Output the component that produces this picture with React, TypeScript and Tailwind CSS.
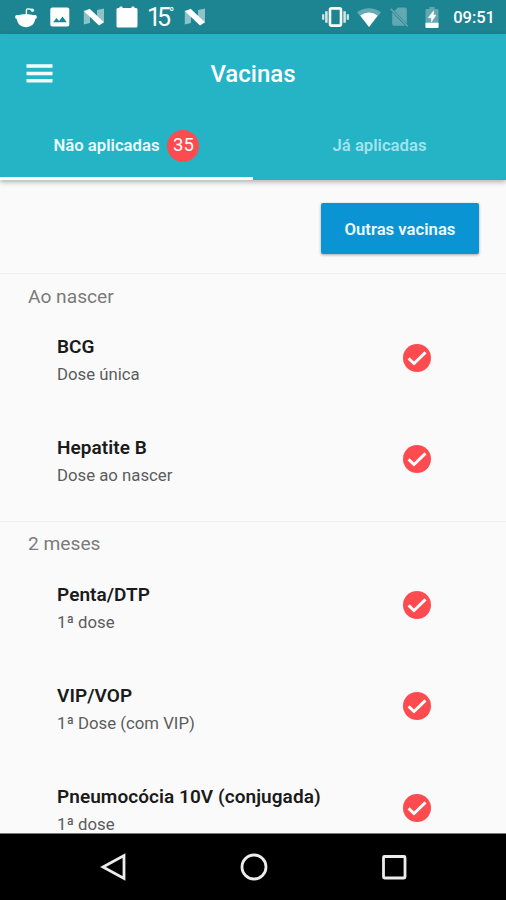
import clsx from "clsx";

interface Dose {
    name: string;
    dose: string;
}

interface Period {
    label: string;
    vaccines: Dose[];
}

const periods: Period[] = [
    {
        label: "Ao nascer",
        vaccines: [
            { name: "BCG", dose: "Dose única" },
            { name: "Hepatite B", dose: "Dose ao nascer" },
        ],
    },
    {
        label: "2 meses",
        vaccines: [
            { name: "Penta/DTP", dose: "1ª dose" },
            { name: "VIP/VOP", dose: "1ª Dose (com VIP)" },
            { name: "Pneumocócia 10V (conjugada)", dose: "1ª dose" },
        ],
    },
];

const RedditIcon = () => (
    <svg className="w-[24px] h-[22px]" viewBox="0 0 24 22" fill="none">
        <path d="M3 9.5Q12 6.5 21 9.5q1.8 1.4.3 3.6C20.6 18 17 21.200 12 21.200S3.4 18 2.7 13.100Q1.2 10.9 3 9.5z" fill="#fff" />
        <circle cx="3" cy="11" r="1.9" fill="#fff" />
        <circle cx="21" cy="11" r="1.9" fill="#fff" />
        <path d="M12.4 9V4.6q0-1.8 1.6-1.7L18 3.5" stroke="#fff" strokeWidth="1.4" />
        <circle cx="18.4" cy="4.2" r="1.7" fill="#e3f1f2" />
    </svg>
);

const PhotoIcon = () => (
    <svg className="w-[20px] h-[20px]" viewBox="0 0 20 20">
        <rect x="0.3" y="0.5" width="19" height="19" rx="2" fill="#fff" />
        <path d="M3.2 15.3 6.5 11l2.6 3 3.4-4.5 4.3 5.8z" fill="#1d8491" />
    </svg>
);

const NougatIcon = () => (
    <svg className="w-[22px] h-[18px]" viewBox="0 0 22 18">
        <path d="M0.8 2.5H7v12.5l-6.2 1.6zM14 2l7-1.5v14l-7-3z" fill="#8fc1c8" />
        <path d="M1 3.2 6.6 0.8 21 14.2 16 17.4z" fill="#fff" />
    </svg>
);

const CalendarIcon = () => (
    <svg className="w-[22px] h-[22px]" viewBox="0 0 22 22" fill="#fff">
        <rect x="0.5" y="2" width="21" height="19.5" rx="1.5" />
        <rect x="3.5" y="0.5" width="3" height="4" rx="0.8" />
        <rect x="15.5" y="0.5" width="3" height="4" rx="0.8" />
    </svg>
);

const VibrateIcon = () => (
    <svg className="w-[27px] h-[20px]" viewBox="0 0 27 20" fill="none">
        <rect x="8" y="1.4" width="11" height="17.2" rx="1.5" stroke="#fff" strokeWidth="2.6" />
        <path d="M4.4 4.3v11.4M22.6 4.3v11.4" stroke="#d3e8eb" strokeWidth="2.5" />
        <path d="M1.2 7.3v5.4M25.8 7.3v5.4" stroke="#d3e8eb" strokeWidth="2.2" />
    </svg>
);

const WifiIcon = () => (
    <svg className="w-[24px] h-[19px]" viewBox="0 0 24 19">
        <path d="M0 4.2Q12-3.8 24 4.2L12 19z" fill="#68abb4" />
        <path d="M3.3 7.6q8.7-6 17.4 0L12 19z" fill="#fff" />
    </svg>
);

const NoSimIcon = () => (
    <svg className="w-[19px] h-[20px]" viewBox="0 0 19 20">
        <path d="M8 0.5h7q1.8 0 1.8 1.8v14.5L4.5 4z" fill="#62a8b1" />
        <path d="M2.2 5.2v11.8q0 1.8 1.8 1.8h11.2z" fill="#62a8b1" />
        <path d="M0.7 1.7 17.7 19.2" stroke="#62a8b1" strokeWidth="1.6" />
    </svg>
);

const BatteryIcon = () => (
    <svg className="w-[14px] h-[21px]" viewBox="0 0 14 21">
        <path d="M1.4 2h3V0h5.2v2h3q.9 0 .9.9V20q0 1-1 1H1.5q-1 0-1-1V2.9q0-.9.9-.9z" fill="#62a8b1" />
        <path d="M0.5 15.8h13V20q0 1-1 1h-11q-1 0-1-1z" fill="#fff" />
        <path d="M8.6 3.8 3.2 10.8h3.2V15l4.6-7H8.6z" fill="#fff" stroke="#fff" strokeWidth="0.5" />
    </svg>
);

const MenuIcon = () => (
    <svg className="w-[27px] h-[19px]" viewBox="0 0 27 19">
        <path d="M0.5 2.1h26M0.5 9.4h26M0.5 16.7h26" stroke="#f4fdfe" strokeWidth="3.5" />
    </svg>
);

const CheckIcon = () => (
    <svg className="w-[28px] h-[28px]" viewBox="0 0 28 28" fill="none">
        <circle cx="14" cy="14" r="14" fill="#fd4b50" />
        <path d="M5.6 14.4 11 19.6 22.5 8.4" stroke="#fff" strokeWidth="2.9" />
    </svg>
);

function StatusBar() {
    return (
        <div className="flex h-[34px] shrink-0 items-center bg-[#1d8491] pl-[14px] pr-[11px] text-white">
            <RedditIcon />
            <div className="ml-[12px]">
                <PhotoIcon />
            </div>
            <div className="ml-[13px]">
                <NougatIcon />
            </div>
            <div className="ml-[11px]">
                <CalendarIcon />
            </div>
            <div className="ml-[9px] flex w-[26px] items-start pt-[2px] text-[25px] leading-[28px] tracking-[-4px]">
                15<span className="ml-[2px] text-[14px] leading-[18px]">°</span>
            </div>
            <div className="ml-[11px]">
                <NougatIcon />
            </div>
            <div className="ml-auto">
                <VibrateIcon />
            </div>
            <div className="ml-[8px]">
                <WifiIcon />
            </div>
            <div className="ml-[9px]">
                <NoSimIcon />
            </div>
            <div className="ml-[16px]">
                <BatteryIcon />
            </div>
            <span className="ml-[14px] mt-[2px] text-[16.5px] font-medium leading-none">09:51</span>
        </div>
    );
}

function Header() {
    return (
        <header className="z-10 shrink-0 bg-[#24b4c6] text-white shadow-[0_2px_5px_rgba(0,0,0,0.3)]">
            <div className="grid h-[79px] grid-cols-[1fr_auto_1fr] items-center px-[26px]">
                <button aria-label="Menu">
                    <MenuIcon />
                </button>
                <h1 className="text-[24px] font-medium">Vacinas</h1>
            </div>
            <div className="grid h-[67px] grid-cols-2">
                <Tab label="Não aplicadas" count={35} active />
                <Tab label="Já aplicadas" />
            </div>
        </header>
    );
}

function Tab({ label, count, active }: { label: string; count?: number; active?: boolean }) {
    return (
        <button
            className={clsx(
                "flex items-center justify-center border-b-[3px] pt-[2px] text-[16.7px] font-semibold",
                active ? "border-white text-[#e9fafc]" : "border-transparent text-[#a3e2eb]"
            )}
        >
            {label}
            {count && (
                <span className="ml-[8px] flex size-[32px] items-center justify-center rounded-full bg-[#fd4b50] text-[18.5px] font-normal text-white">
                    {count}
                </span>
            )}
        </button>
    );
}

function VaccineRow({ name, dose }: Dose) {
    return (
        <li className="flex h-[101.25px] items-center justify-between pl-[57px] pr-[75px]">
            <div className="pt-[5px]">
                <p className="text-[19px] font-semibold leading-[29px] tracking-[0.06px] text-[#1b1b1b]">{name}</p>
                <p className="text-[16.75px] leading-[27px] text-[#5c5c5c]">{dose}</p>
            </div>
            <CheckIcon />
        </li>
    );
}

export default function App() {
    return (
        <div className="flex h-[900px] w-[506px] flex-col overflow-hidden bg-[#fafafa] font-['Roboto',sans-serif]">
            <StatusBar />
            <Header />
            <main className="min-h-0 flex-1 overflow-hidden">
                <div className="flex h-[93px] justify-end pr-[27px] pt-[23px]">
                    <button className="h-[51px] w-[158px] rounded-[2px] bg-[#0a94d4] pt-[2px] text-[16.7px] font-semibold text-[#eefaff] shadow-[0_1px_3px_rgba(0,0,0,0.35)]">
                        Outras vacinas
                    </button>
                </div>
                {periods.map((period) => (
                    <section key={period.label} className="border-t border-[#f0f0f0] pb-[11px]">
                        <h2 className="h-[33px] pl-[28px] pt-[8.5px] text-[19.2px] leading-[28px] text-[#7b7b7b]">
                            {period.label}
                        </h2>
                        <ul>
                            {period.vaccines.map((vaccine) => (
                                <VaccineRow key={vaccine.name} {...vaccine} />
                            ))}
                        </ul>
                    </section>
                ))}
            </main>
            <nav className="flex h-[67px] shrink-0 items-center justify-center gap-[112px] border-t border-[#777] bg-black pl-px">
                <svg className="h-[28px] w-[28px]" viewBox="0 0 28 28" fill="none" stroke="#ededed" strokeWidth="2.8">
                    <path d="M24 2.5v23L3 14z" />
                </svg>
                <svg className="h-[28px] w-[28px]" viewBox="0 0 28 28" fill="none" stroke="#ededed" strokeWidth="2.8">
                    <circle cx="14" cy="14" r="12" />
                </svg>
                <svg className="h-[28px] w-[28px]" viewBox="0 0 28 28" fill="none" stroke="#ededed" strokeWidth="2.8">
                    <rect x="3.5" y="3.5" width="21.5" height="21.5" rx="1" />
                </svg>
            </nav>
        </div>
    );
}
